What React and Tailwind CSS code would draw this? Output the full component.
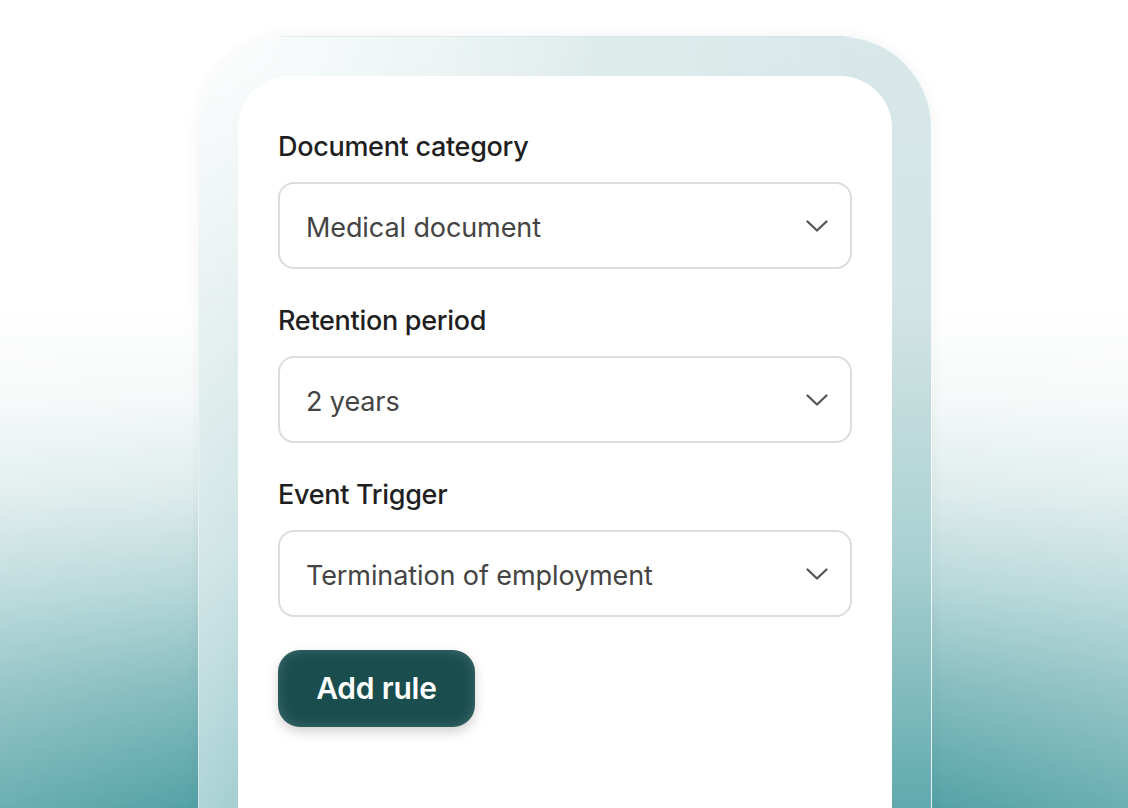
import React from 'react';

const fields = [
    { label: 'Document category', value: 'Medical document' },
    { label: 'Retention period', value: '2 years' },
    { label: 'Event Trigger', value: 'Termination of employment' },
];

const Chevron = () => (
    <svg width="22" height="14" viewBox="0 0 22 14" fill="none" stroke="#555555" strokeWidth="2.3" strokeLinecap="round" strokeLinejoin="round">
        <path d="M1.5 2.5L11 11.5L20.5 2.5" />
    </svg>
);

const SelectField = ({ label, value }) => (
    <div className="mb-[36px]">
        <div className="text-[27px] leading-[32px] font-medium text-[#1f1f1f] mb-[19px] tracking-[-0.3px]">{label}</div>
        <button className="w-full h-[87px] flex items-center justify-between pl-[26px] pr-[22px] bg-white border-2 border-[#dcdcdc] rounded-[16px] text-left">
            <span className="pt-[6px] text-[27px] text-[#444444] tracking-[-0.1px]">{value}</span>
            <Chevron />
        </button>
    </div>
);

export default function App() {
    return (
        <div
            className="w-[1128px] h-[808px] overflow-hidden flex pl-[198px] font-['Inter',sans-serif]"
            style={{
                background:
                    'linear-gradient(to right, rgba(255,255,255,0.14) 0%, rgba(255,255,255,0) 17%, rgba(255,255,255,0) 83%, rgba(255,255,255,0.14) 100%), linear-gradient(to bottom, #ffffff 0%, #ffffff 38%, #f6f9f9 49%, #deecec 61%, #b6d7d8 73%, #86bdc0 85%, #54a2a6 100%)',
            }}
        >
            <div
                className="mt-[36px] w-[734px] h-[900px] shrink-0 rounded-[92px] border border-white/70 pt-[39px] px-[39px] shadow-[0_0_14px_rgba(0,0,0,0.05)]"
                style={{
                    background:
                        'radial-gradient(ellipse 55% 30% at 0% 0%, rgba(255,255,255,0.85), rgba(255,255,255,0) 100%), linear-gradient(to right, rgba(255,255,255,0.5) 0%, rgba(255,255,255,0.42) 6%, rgba(255,255,255,0) 90%), linear-gradient(to bottom, #d8e8e8 0%, #d3e4e4 30%, #a9d0d1 58%, #5fa9ae 86%, #57a4a8 100%)',
                }}
            >
                <div className="bg-white rounded-[52px] h-[900px] px-[40px] pt-[55px]">
                    {fields.map((f) => (
                        <SelectField key={f.label} label={f.label} value={f.value} />
                    ))}
                    <button className="-mt-[3px] h-[77px] w-[197px] rounded-[22px] bg-[#194d4e] text-white text-[30px] font-semibold tracking-[-0.2px] shadow-[inset_0_0_14px_rgba(255,255,255,0.18),0_5px_12px_rgba(0,0,0,0.18)]">
                        Add rule
                    </button>
                </div>
            </div>
        </div>
    );
}
